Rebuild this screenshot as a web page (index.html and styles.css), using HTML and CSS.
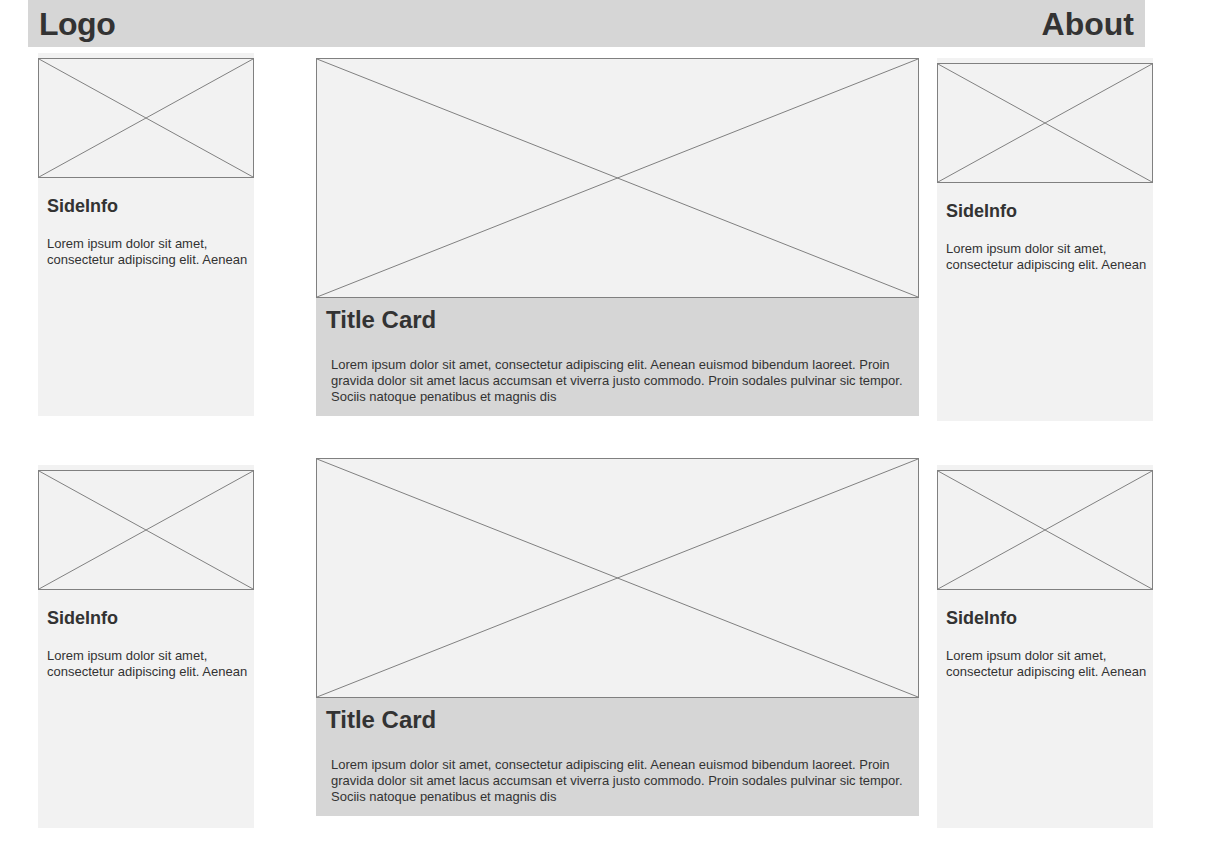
FILE: index.html
```html
<!DOCTYPE html>
<html>
<head>
<meta charset="utf-8">
<title>Wireframe</title>
<link rel="stylesheet" href="styles.css">
</head>
<body>
<div class="page">
  <header class="topbar">
    <h1 class="brand">Logo</h1>
    <h1 class="nav">About</h1>
  </header>

  <section class="row row-1">
    <div class="side side-left">
      <svg class="ph ph-side" viewBox="0 0 100 100" preserveAspectRatio="none"><line x1="0" y1="0" x2="100" y2="100" vector-effect="non-scaling-stroke"/><line x1="100" y1="0" x2="0" y2="100" vector-effect="non-scaling-stroke"/></svg>
      <h3>SideInfo</h3>
      <p>Lorem ipsum dolor sit amet, consectetur adipiscing elit. Aenean</p>
    </div>
    <div class="main">
      <svg class="ph ph-main" viewBox="0 0 100 100" preserveAspectRatio="none"><line x1="0" y1="0" x2="100" y2="100" vector-effect="non-scaling-stroke"/><line x1="100" y1="0" x2="0" y2="100" vector-effect="non-scaling-stroke"/></svg>
      <h2>Title Card</h2>
      <p>Lorem ipsum dolor sit amet, consectetur adipiscing elit. Aenean euismod bibendum laoreet. Proin gravida dolor sit amet lacus accumsan et viverra justo commodo. Proin sodales pulvinar sic tempor. Sociis natoque penatibus et magnis dis</p>
    </div>
    <div class="side side-right">
      <svg class="ph ph-side" viewBox="0 0 100 100" preserveAspectRatio="none"><line x1="0" y1="0" x2="100" y2="100" vector-effect="non-scaling-stroke"/><line x1="100" y1="0" x2="0" y2="100" vector-effect="non-scaling-stroke"/></svg>
      <h3>SideInfo</h3>
      <p>Lorem ipsum dolor sit amet, consectetur adipiscing elit. Aenean</p>
    </div>
  </section>

  <section class="row row-2">
    <div class="side side-left">
      <svg class="ph ph-side" viewBox="0 0 100 100" preserveAspectRatio="none"><line x1="0" y1="0" x2="100" y2="100" vector-effect="non-scaling-stroke"/><line x1="100" y1="0" x2="0" y2="100" vector-effect="non-scaling-stroke"/></svg>
      <h3>SideInfo</h3>
      <p>Lorem ipsum dolor sit amet, consectetur adipiscing elit. Aenean</p>
    </div>
    <div class="main">
      <svg class="ph ph-main" viewBox="0 0 100 100" preserveAspectRatio="none"><line x1="0" y1="0" x2="100" y2="100" vector-effect="non-scaling-stroke"/><line x1="100" y1="0" x2="0" y2="100" vector-effect="non-scaling-stroke"/></svg>
      <h2>Title Card</h2>
      <p>Lorem ipsum dolor sit amet, consectetur adipiscing elit. Aenean euismod bibendum laoreet. Proin gravida dolor sit amet lacus accumsan et viverra justo commodo. Proin sodales pulvinar sic tempor. Sociis natoque penatibus et magnis dis</p>
    </div>
    <div class="side side-right">
      <svg class="ph ph-side" viewBox="0 0 100 100" preserveAspectRatio="none"><line x1="0" y1="0" x2="100" y2="100" vector-effect="non-scaling-stroke"/><line x1="100" y1="0" x2="0" y2="100" vector-effect="non-scaling-stroke"/></svg>
      <h3>SideInfo</h3>
      <p>Lorem ipsum dolor sit amet, consectetur adipiscing elit. Aenean</p>
    </div>
  </section>
</div>
</body>
</html>
```

FILE: styles.css
```css
html, body {
  margin: 0;
  padding: 0;
  background: #ffffff;
}

body {
  font-family: "Liberation Sans", Arial, sans-serif;
  color: #333333;
}

.page {
  padding-left: 28px;
}

.topbar {
  width: 1117px;
  height: 47px;
  box-sizing: border-box;
  padding: 6px 11px 4px 11px;
  background: #d6d6d6;
  display: flex;
  justify-content: space-between;
  align-items: flex-start;
}

.topbar h1 {
  margin: 0;
  font-size: 32px;
  line-height: 37px;
  font-weight: bold;
  color: #333333;
}

.topbar .brand {
  letter-spacing: -0.5px;
}

.row {
  display: flex;
  align-items: flex-start;
  margin-left: 10px;
}

.row-1 {
  margin-top: 6px;
}

.row-2 {
  margin-top: 37px;
}

.side {
  width: 216px;
  height: 363px;
  box-sizing: border-box;
  padding-top: 5px;
  background: #f2f2f2;
  flex: none;
}

.main {
  width: 603px;
  height: 358px;
  background: #d6d6d6;
  margin-left: 62px;
  margin-right: 18px;
  flex: none;
}

.row-1 .main,
.row-1 .side-right {
  margin-top: 5px;
}

.row-2 .side {
  margin-top: 7px;
}

.ph {
  display: block;
  width: 100%;
  box-sizing: border-box;
  border: 1px solid #808080;
  background: #f2f2f2;
}

.ph line {
  stroke: #808080;
  stroke-width: 1;
}

.ph-side {
  height: 120px;
}

.ph-main {
  height: 240px;
}

.side h3 {
  margin: 18px 0 0 9px;
  font-size: 18px;
  line-height: 20px;
  font-weight: bold;
}

.side p {
  margin: 20px 0 0 9px;
  font-size: 13px;
  line-height: 16px;
}

.main h2 {
  margin: 8px 0 0 10px;
  font-size: 24px;
  line-height: 28px;
  font-weight: bold;
}

.main p {
  margin: 23px 10px 0 15px;
  font-size: 13px;
  line-height: 16px;
}
```
